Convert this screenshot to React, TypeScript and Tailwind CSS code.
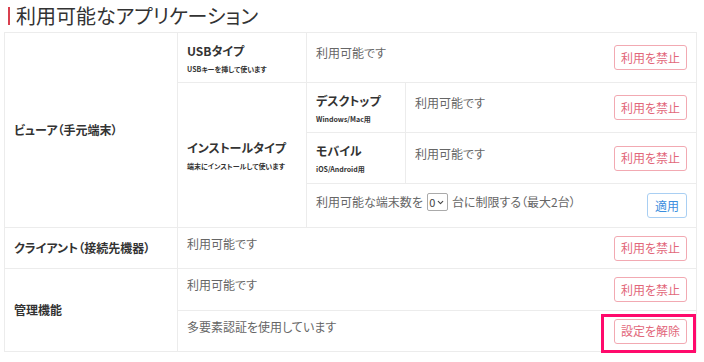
import { ChevronDown } from "lucide-react";
import type { ReactNode } from "react";

function BanButton({ label = "利用を禁止" }: { label?: string }) {
  return (
    <button className="h-[25px] w-[73px] shrink-0 rounded-[3px] border border-[#f2a9b2] bg-white text-[12px] leading-none text-[#e2677a]">
      {label}
    </button>
  );
}

function Status({ text, action }: { text: ReactNode; action: ReactNode }) {
  return (
    <div className="flex items-start justify-between">
      <span className="leading-[16px]">{text}</span>
      {action}
    </div>
  );
}

function Label({ title, sub }: { title: string; sub: string }) {
  return (
    <>
      <div className="text-[12px] font-bold leading-[18px] text-[#333]">{title}</div>
      <div className="mt-[4px] text-[7px] font-bold leading-[10px] text-[#333]">{sub}</div>
    </>
  );
}

const cell = "border border-[#ececec] px-[9px] align-middle";

export default function App() {
  return (
    <div className="min-h-[362px] bg-white px-[4px] font-['Noto_Sans_CJK_JP',sans-serif] text-[12px] text-[#666] [font-feature-settings:'palt']">
      <div className="flex h-[32px] items-center pb-[1px] pl-[4px]">
        <span className="h-[18px] w-[2px] bg-[#d9404f]" />
        <h1 className="ml-[6px] text-[20px] leading-none text-[#333]">利用可能なアプリケーション</h1>
      </div>

      <table className="w-[693px] table-fixed border-collapse">
        <colgroup>
          <col className="w-[173px]" />
          <col className="w-[129px]" />
          <col className="w-[99px]" />
          <col />
        </colgroup>
        <tbody>
          <tr className="h-[50px]">
            <td rowSpan={4} className={`${cell} text-[12px] font-bold text-[#333]`}>
              ビューア（手元端末）
            </td>
            <td className={`${cell} py-[8px]`}>
              <Label title="USBタイプ" sub="USBキーを挿して使います" />
            </td>
            <td colSpan={2} className={cell}>
              <Status text="利用可能です" action={<BanButton />} />
            </td>
          </tr>
          <tr className="h-[50px]">
            <td rowSpan={3} className={cell}>
              <Label title="インストールタイプ" sub="端末にインストールして使います" />
            </td>
            <td className={`${cell} py-[8px]`}>
              <Label title="デスクトップ" sub="Windows/Mac用" />
            </td>
            <td className={cell}>
              <Status text="利用可能です" action={<BanButton />} />
            </td>
          </tr>
          <tr className="h-[51px]">
            <td className={`${cell} py-[8px]`}>
              <Label title="モバイル" sub="iOS/Android用" />
            </td>
            <td className={cell}>
              <Status text="利用可能です" action={<BanButton />} />
            </td>
          </tr>
          <tr className="h-[44px]">
            <td colSpan={2} className={cell}>
              <Status
                text={
                  <span className="flex items-center">
                    利用可能な端末数を
                    <span className="mx-[4px] flex h-[18px] w-[21px] items-center justify-center gap-[1px] rounded-[2px] border border-[#aaa] text-[11px] text-[#444]">
                      0
                      <ChevronDown size={9} strokeWidth={3} />
                    </span>
                    台に制限する（最大2台）
                  </span>
                }
                action={
                  <button className="h-[25px] w-[40px] shrink-0 rounded-[3px] border border-[#a9cff3] bg-white text-[12px] leading-none text-[#3b8ede]">
                    適用
                  </button>
                }
              />
            </td>
          </tr>
          <tr className="h-[41px]">
            <td className={`${cell} text-[12px] font-bold text-[#333]`}>クライアント（接続先機器）</td>
            <td colSpan={3} className={cell}>
              <Status text="利用可能です" action={<BanButton />} />
            </td>
          </tr>
          <tr className="h-[42px]">
            <td rowSpan={2} className={`${cell} text-[12px] font-bold text-[#333]`}>
              管理機能
            </td>
            <td colSpan={3} className={cell}>
              <Status text="利用可能です" action={<BanButton />} />
            </td>
          </tr>
          <tr className="h-[41px]">
            <td colSpan={3} className={cell}>
              <Status
                text="多要素認証を使用しています"
                action={
                  <span className="relative flex">
                    <BanButton label="設定を解除" />
                    <span className="pointer-events-none absolute bottom-[-9px] left-[-13px] right-[-9px] top-[-5px] border-[3px] border-[#ff0a6c]" />
                  </span>
                }
              />
            </td>
          </tr>
        </tbody>
      </table>
    </div>
  );
}
